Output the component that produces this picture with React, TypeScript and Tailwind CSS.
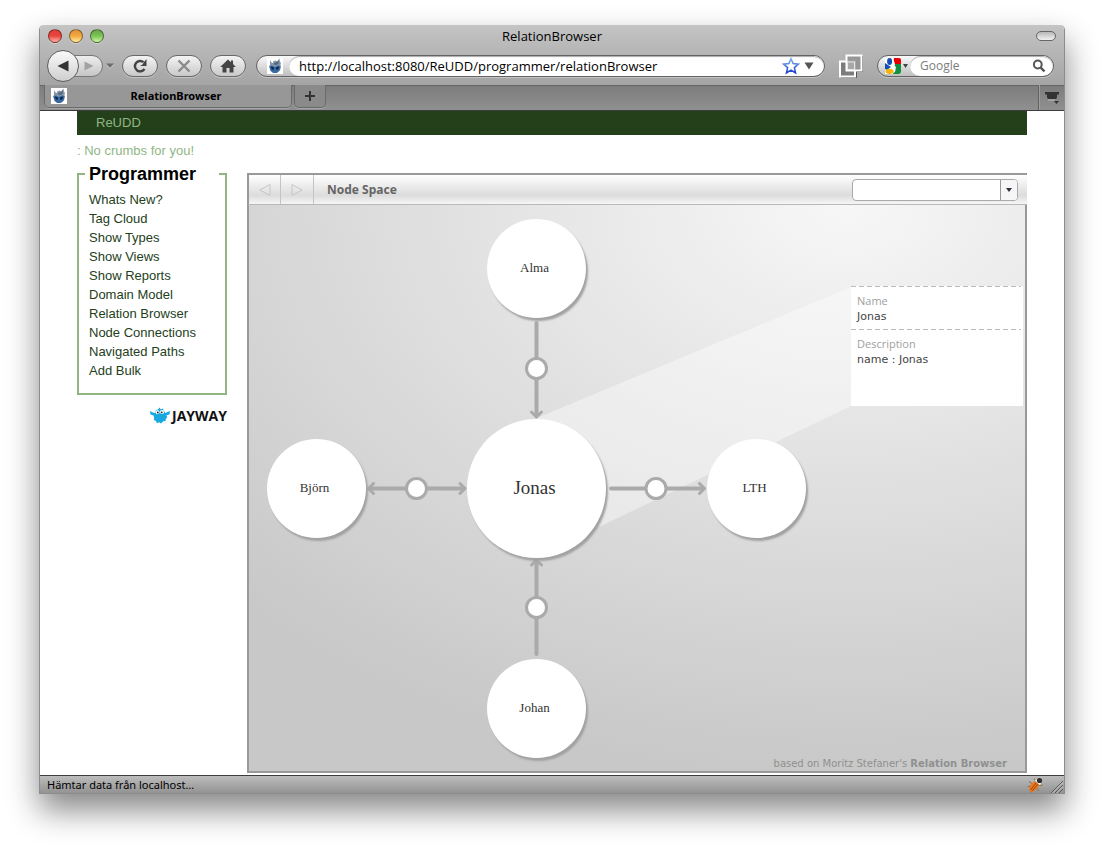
import React from "react";

const UI = "font-['Open_Sans','Noto_Sans',sans-serif]";
const SANS = "font-['Liberation_Sans',Arial,sans-serif]";
const FLASH = "font-['DejaVu_Sans',Verdana,sans-serif]";
const SERIF = "font-['Liberation_Serif',Georgia,serif]";

const PILL =
  "flex items-center justify-center rounded-full border border-[#686868] bg-linear-to-b from-[#f4f4f4] to-[#c9c9c9] shadow-[0_1px_0_#c4c4c4]";

const MENU = [
  "Whats New?",
  "Tag Cloud",
  "Show Types",
  "Show Views",
  "Show Reports",
  "Domain Model",
  "Relation Browser",
  "Node Connections",
  "Navigated Paths",
  "Add Bulk",
];

const NODES = [
  { name: "Alma", place: "left-[238px] top-[14px] size-[99px] text-[13px]" },
  { name: "Björn", place: "left-[18px] top-[234px] size-[99px] text-[13px]" },
  { name: "LTH", place: "left-[458px] top-[234px] size-[99px] text-[13px]" },
  { name: "Johan", place: "left-[238px] top-[454px] size-[99px] text-[13px]" },
  { name: "Jonas", place: "left-[218px] top-[214px] size-[139px] text-[19px]" },
];

function Light({ label, tone }: { label: string; tone: string }) {
  return (
    <button
      type="button"
      aria-label={label}
      className={`size-[14px] rounded-full border border-black/45 shadow-[0_1px_0_#d5d5d5] ${tone}`}
    />
  );
}

function SiteIcon() {
  return (
    <svg viewBox="0 0 16 16" className="size-4" aria-hidden="true">
      <rect width="16" height="16" fill="#fff" />
      <path d="M3 2 4.500 4.500 6 5 6.500 3 9 2.500l1 1 2.500-3 .5 4 1-.5-.5 3.500.5 1.500-1 3.500L10 15H6l-2.500-2L2 8.500 3 7z" fill="#8397a8" />
      <path d="M2.500 8 5 7.500l3 1.500 2.500-1.500 3 .5-1 4.500L9.500 15H6.500L3.500 12.500z" fill="#3568a6" />
      <path d="M4 8.500 7 9.500 6.500 12l-2-1zM9 9.500l3-1-.5 2.500-2 1z" fill="#0d2440" />
      <path d="M7 5 10 4l2-2-.5 4L9 7 7 6.500zM6.500 12.500h3L8 14z" fill="#55697c" />
    </svg>
  );
}

function Chrome() {
  return (
    <header className={`bg-linear-to-b from-[#c4c4c4] to-[#979797] ${UI}`}>
      <div className="flex h-[22px] items-center px-2">
        <div className="flex flex-1 gap-[7px]">
          <Light label="Close" tone="bg-linear-to-b from-[#e04038] via-[#e8433f] to-[#ffb0a8]" />
          <Light label="Minimize" tone="bg-linear-to-b from-[#e2923c] via-[#f2a83e] to-[#fff0a0]" />
          <Light label="Zoom" tone="bg-linear-to-b from-[#68a848] via-[#7cc455] to-[#d0f8a8]" />
        </div>
        <h1 className="text-[13px] leading-[16px] text-black">RelationBrowser</h1>
        <div className="flex flex-1 justify-end">
          <button
            type="button"
            aria-label="Toggle toolbar"
            className="h-[10px] w-5 rounded-full border border-[#666] bg-linear-to-b from-[#b8b8b8] to-[#f2f2f2]"
          />
        </div>
      </div>

      <div className="flex h-[38px] items-center pr-[10px] pb-px pl-[7px]">
        <button
          type="button"
          aria-label="Back"
          className="z-10 flex size-8 items-center justify-center rounded-full border border-[#5e5e5e] bg-linear-to-b from-[#fafafa] to-[#cfcfcf]"
        >
          <svg viewBox="0 0 12 12" className="size-3" aria-hidden="true">
            <path d="M0.5 6 11.5 0.5v11z" fill="#333" />
          </svg>
        </button>
        <button
          type="button"
          aria-label="Forward"
          className="-ml-2 flex h-[22px] w-8 items-center justify-center rounded-r-full border border-[#777] bg-linear-to-b from-[#eee] to-[#c6c6c6] pl-1"
        >
          <svg viewBox="0 0 10 10" className="size-[10px]" aria-hidden="true">
            <path d="M0.5 0.5 9.5 5l-9 4.5z" fill="#a2a2a2" />
          </svg>
        </button>
        <button type="button" aria-label="History" className="ml-[3px] flex w-2 justify-center">
          <svg viewBox="0 0 8 6" className="h-[6px] w-2 shrink-0" aria-hidden="true">
            <path d="M0 0.5h8L4 5z" fill="#6c6c6c" />
            <path d="M0.5 1.500 4 5.500 7.500 1.500" fill="none" stroke="#d0d0d0" strokeWidth=".7" />
          </svg>
        </button>
        <div className="ml-2 flex gap-2">
          <button type="button" aria-label="Reload" className={`h-[22px] w-9 ${PILL}`}>
            <svg viewBox="0 0 16 16" className="size-4" aria-hidden="true">
              <path d="M12.500 11A5.200 5.200 0 1 1 11.500 4.200" fill="none" stroke="#444" strokeWidth="2.400" />
              <path d="M14.500 1v7H8l2.500-1.500L12 4z" fill="#444" />
            </svg>
          </button>
          <button type="button" aria-label="Stop" className={`h-[22px] w-9 ${PILL}`}>
            <svg viewBox="0 0 14 14" className="size-[14px]" aria-hidden="true">
              <path d="M1.500 1.500l11 11M12.500 1.500l-11 11" stroke="#8a8a8a" strokeWidth="2.400" />
            </svg>
          </button>
          <button type="button" aria-label="Home" className={`h-[22px] w-9 ${PILL}`}>
            <svg viewBox="0 0 16 14" className="h-[14px] w-4" aria-hidden="true">
              <path d="M8 0.5l3 2.7V1.5h2v3.6L15.8 8H13.5v5.5h-4V9h-3v4.5h-4V8H.2z" fill="#444" />
            </svg>
          </button>
        </div>

        <div className="ml-[10px] flex h-[22px] min-w-0 flex-1 items-stretch overflow-hidden rounded-full border border-[#636363] bg-linear-to-b from-[#fafafa] to-[#bfbfbf] shadow-[0_1px_0_#c4c4c4]">
          <div className="flex w-8 items-center pl-[10px]">
            <SiteIcon />
          </div>
          <div className="flex min-w-0 flex-1 items-center rounded-full bg-white pr-[10px] pl-[10px] shadow-[inset_0_1px_1px_#aaa]">
            <input
              aria-label="Address"
              defaultValue="http://localhost:8080/ReUDD/programmer/relationBrowser"
              className="h-5 min-w-0 flex-1 bg-transparent text-[13px] text-black outline-none"
            />
            <button type="button" aria-label="Bookmark this page">
              <svg viewBox="0 0 18 18" className="size-[18px]" aria-hidden="true">
                <defs>
                  <linearGradient id="star" x1="0" y1="0" x2="0" y2="1">
                    <stop offset="0" stopColor="#7fb0e8" />
                    <stop offset="1" stopColor="#1e3fd0" />
                  </linearGradient>
                </defs>
                <path
                  d="M9 1.8l2.1 4.8 5.2.5-3.9 3.5 1.1 5.2L9 13.1l-4.5 2.7 1.1-5.2L1.7 7.1l5.2-.5z"
                  fill="#fff"
                  stroke="url(#star)"
                  strokeWidth="1.6"
                />
              </svg>
            </button>
            <button type="button" aria-label="Show address list" className="ml-1">
              <svg viewBox="0 0 10 8" className="h-2 w-[10px]" aria-hidden="true">
                <path d="M0.5 0.5h9L5 7.5z" fill="#555" />
              </svg>
            </button>
          </div>
        </div>

        <button type="button" aria-label="Windows" className="ml-[14px]">
          <svg viewBox="0 0 24 24" className="size-6" aria-hidden="true">
            <path d="M2 23.500h15.500V17M17 17.500h6.500V2" fill="none" stroke="#555" />
            <rect x="1" y="7.5" width="15" height="15" fill="#7c7c7c" stroke="#fff" strokeWidth="2" />
            <rect x="7.500" y="1.500" width="15" height="15" fill="#8d8d8d" fillOpacity=".75" stroke="#fff" strokeWidth="2" />
            <rect x="8.500" y="8" width="7" height="7.500" fill="#a8a8a8" stroke="#e8e8e8" />
          </svg>
        </button>

        <div className="ml-[14px] flex h-[22px] w-[177px] items-stretch overflow-hidden rounded-full border border-[#636363] bg-linear-to-b from-[#fafafa] to-[#bfbfbf] shadow-[0_1px_0_#c4c4c4]">
          <button type="button" aria-label="Choose search engine" className="flex w-8 items-center gap-[2px] pl-[7px]">
            <svg viewBox="0 0 16 16" className="size-4 shrink-0" aria-hidden="true">
              <path d="M0 0h16v16H0z" fill="#fff" />
              <path d="M8 0h6a2 2 0 0 1 2 2v4h-6z" fill="#e60000" />
              <path d="M10 6h6v8a2 2 0 0 1-2 2H8z" fill="#149040" />
              <path d="M0 5l6 4-4 3-2-1z" fill="#1450b4" />
              <path d="M9 0 7.500 6 11 9l-1 5-4 2V8L2 3 4 0z" fill="#fff" />
              <ellipse cx="4.600" cy="3.500" rx="2.500" ry="3.400" fill="#1450b4" />
              <ellipse cx="4.500" cy="13.300" rx="4" ry="2.600" fill="#f5b50e" />
            </svg>
            <svg viewBox="0 0 5 4" className="h-1 w-[5px] shrink-0" aria-hidden="true">
              <path d="M0 0h5L2.500 4z" fill="#444" />
            </svg>
          </button>
          <div className="flex min-w-0 flex-1 items-center rounded-full bg-white pr-[7px] pl-[10px] shadow-[inset_0_1px_1px_#aaa]">
            <input
              aria-label="Search"
              placeholder="Google"
              className="h-5 min-w-0 flex-1 bg-transparent text-[12px] outline-none placeholder:text-[#7d7d7d]"
            />
            <button type="button" aria-label="Start search">
              <svg viewBox="0 0 14 14" className="size-[14px]" aria-hidden="true">
                <circle cx="5.800" cy="5.500" r="3.900" fill="none" stroke="#555" strokeWidth="2" />
                <path d="M8.700 8.600 12.500 12.400" stroke="#555" strokeWidth="2.400" />
              </svg>
            </button>
          </div>
        </div>
      </div>

      <div className="flex h-[26px] items-start border-b border-[#3c3c3c] bg-linear-to-b from-[#7c7c7c] to-[#909090] pl-1 shadow-[inset_0_1px_0_#666]">
        <div className="flex h-[23px] w-[248px] items-center rounded-b-[5px] border-x border-b border-[#6a6a6a] bg-[#979797] pl-[6px] shadow-[0_1px_0_#a5a5a5]">
          <SiteIcon />
          <span className="flex-1 pt-px pr-[6px] text-center font-['Noto_Sans',sans-serif] text-[11px] font-bold text-black">
            RelationBrowser
          </span>
        </div>
        <button
          type="button"
          aria-label="Open a new tab"
          className="ml-[2px] flex h-[23px] w-8 items-center justify-center rounded-b-[5px] border-x border-b border-[#6a6a6a] bg-[#8a8a8a] shadow-[0_1px_0_#a5a5a5]"
        >
          <svg viewBox="0 0 10 10" className="size-[10px]" aria-hidden="true">
            <path d="M5 0v10M0 5h10" stroke="#333" strokeWidth="2" />
          </svg>
        </button>
        <button
          type="button"
          aria-label="List all tabs"
          className="ml-auto flex h-[25px] w-[26px] items-center justify-center border-l border-[#606060] shadow-[inset_1px_0_0_#a0a0a0]"
        >
          <svg viewBox="0 0 14 12" className="h-3 w-[14px]" aria-hidden="true">
            <path d="M0 0h14v2.500h-2V5.500L11 7H3L2 5.500V2.500H0z" fill="#333" />
            <path d="M3 8h7" stroke="#bbb" />
            <path d="M9 9h5l-2.500 3z" fill="#333" />
          </svg>
        </button>
      </div>
    </header>
  );
}

function JaywayLogo() {
  return (
    <a href="#jayway" aria-label="Jayway" className="mt-3 flex items-center justify-end gap-[2px] text-[#111]">
      <svg viewBox="0 0 20 18" className="h-[18px] w-5" aria-hidden="true">
        <path
          d="M0 4l3 1.500L5 6l1-3L8 2.500 9.500.5l1.300 2L13 1.500l.5 2L15.500 6l2-1L20 4l-.5 3.500-3 .8.800 2.200-1.500 1.300-.2 2.200-2.300.2L11 16.500l-1.800-1.200-2.400.9-.7-2.200-2.300-.9.400-2L3.500 8.500.5 7.500z"
          fill="#18a9e0"
        />
        <circle cx="7.500" cy="5.300" r="2" fill="#fff" />
        <circle cx="12" cy="5.100" r="2" fill="#fff" />
        <circle cx="7.800" cy="5.500" r=".9" fill="#222" />
        <circle cx="11.700" cy="5.300" r=".9" fill="#222" />
      </svg>
      <span className="font-['Open_Sans',sans-serif] text-[14px] leading-[18px] font-bold">JAYWAY</span>
    </a>
  );
}

function Sidebar() {
  return (
    <nav aria-label="Programmer" className={`w-[150px] shrink-0 ${SANS}`}>
      <fieldset className="border-2 border-[#8fb683] px-[6px] pb-[13px]">
        <legend className="w-full pl-1 text-[18px] leading-[20px] font-bold text-black">Programmer</legend>
        <ul className="pt-[6px] pl-1">
          {MENU.map((item) => (
            <li key={item} className="text-[13px] leading-[19px]">
              <a href="#menu" className="text-[#24401b]">
                {item}
              </a>
            </li>
          ))}
        </ul>
      </fieldset>
      <JaywayLogo />
    </nav>
  );
}

function Edges() {
  return (
    <svg className="absolute top-0 left-0 h-full w-full" aria-hidden="true">
      <polygon points="288,213 602,82 602,201 350,322" fill="#fff" fillOpacity=".4" />
      <g fill="none" stroke="#aaa" strokeWidth="4" strokeLinecap="round">
        <path d="M287.500 118V209M287.500 356V449M362 283.500H454M121 283.500H215" />
        <g strokeWidth="3" strokeLinejoin="round">
          <path d="M282.500 207l5 5 5-5M282.500 360l5-5 5 5M450.500 278.500l5 5-5 5M124.500 278.500l-5 5 5 5M211 278.500l5 5-5 5" />
        </g>
      </g>
      <g fill="#fff" stroke="#aaa" strokeWidth="3">
        <circle cx="287.500" cy="163.500" r="10" />
        <circle cx="287.500" cy="402.500" r="10" />
        <circle cx="167.500" cy="283.500" r="10" />
        <circle cx="407" cy="283.500" r="10" />
      </g>
    </svg>
  );
}

function Browser() {
  return (
    <section className="min-w-0 flex-1">
      <div className="flex h-8 items-center border-t-2 border-b border-l-2 border-t-[#999] border-b-[#b9b9b9] border-l-[#999] bg-linear-to-b from-white via-[#dcdcdc] via-70% to-[#f6f6f6] pr-[9px]">
        <button type="button" aria-label="Previous" className="flex h-full w-8 items-center justify-center border-r border-[#c4c4c4]">
          <svg viewBox="0 0 12 12" className="size-3" aria-hidden="true">
            <path d="M11 .5v11L.8 6z" fill="none" stroke="#c6c6c6" />
          </svg>
        </button>
        <button type="button" aria-label="Next" className="flex h-full w-[33px] items-center justify-center border-r border-[#c4c4c4]">
          <svg viewBox="0 0 12 12" className="size-3" aria-hidden="true">
            <path d="M1 .5v11L11.200 6z" fill="none" stroke="#c6c6c6" />
          </svg>
        </button>
        <h2 className="ml-[13px] flex-1 pt-px font-['Noto_Sans',Tahoma,sans-serif] text-[12px] leading-[16px] font-bold text-[#666]">
          Node Space
        </h2>
        <div className="flex h-[22px] w-[166px] overflow-hidden rounded border border-[#aaa] bg-white">
          <input aria-label="Find node" className={`min-w-0 flex-1 px-1 text-[11px] outline-none ${FLASH}`} />
          <button type="button" aria-label="Show nodes" className="flex w-[17px] items-center justify-center border-l border-[#999] bg-[#f6f6f6]">
            <svg viewBox="0 0 6 4" className="h-1 w-[6px]" aria-hidden="true">
              <path d="M0 0h6L3 4z" fill="#2b333c" />
            </svg>
          </button>
        </div>
      </div>

      <div className="relative h-[568px] overflow-hidden border-r-2 border-b-2 border-l-2 border-[#999] bg-[radial-gradient(ellipse_840px_570px_at_77%_0%,#f7f7f7,#c8c8c8)]">
        <Edges />
        {NODES.map((node) => (
          <button
            key={node.name}
            type="button"
            className={`absolute flex items-center justify-center rounded-full bg-white pr-1 pb-px text-[#333] shadow-[2px_3px_2px_#a2a2a2] ${SERIF} ${node.place}`}
          >
            {node.name}
          </button>
        ))}
        <dl className={`absolute top-[81px] right-[2px] w-[172px] bg-white pb-[38px] text-[11px] leading-[16px] ${FLASH}`}>
          <svg className="block h-px w-[170px]" aria-hidden="true">
            <path d="M0 .5H170" stroke="#bbb" strokeDasharray="5 3" />
          </svg>
          <div className="px-[6px] pt-[6px] pb-[4px]">
            <dt className={`text-[#a0a0a0] ${UI}`}>Name</dt>
            <dd className="text-[#444]">Jonas</dd>
          </div>
          <svg className="block h-px w-[170px]" aria-hidden="true">
            <path d="M0 .5H170" stroke="#bbb" strokeDasharray="5 3" />
          </svg>
          <div className="px-[6px] pt-[6px]">
            <dt className={`text-[#a0a0a0] ${UI}`}>Description</dt>
            <dd className="text-[#444]">name : Jonas</dd>
          </div>
        </dl>
        <p className={`absolute right-[18px] bottom-0 text-[10px] leading-[14px] text-[#909090] ${FLASH}`}>
          based on Moritz Stefaner's <b>Relation Browser</b>
        </p>
      </div>
    </section>
  );
}

function StatusBar() {
  return (
    <footer className="flex h-[18px] items-center border-t border-[#3c3c3c] bg-linear-to-b from-[#bdbdbd] to-[#939393] pl-[7px] font-['Noto_Sans',sans-serif]">
      <p className="flex-1 text-[11px] leading-[17px] text-black">Hämtar data från localhost…</p>
      <button type="button" aria-label="Firebug" className="mr-2">
        <svg viewBox="0 0 16 16" className="size-4" aria-hidden="true">
          <path d="M2 4.500 5 6.500M.8 9.500 5 9M4 15.500l1.500-3M7.500 1.500 8.500 5M15.500 8l-4 .5M12 13.500 9.500 11" stroke="#8a6a3a" />
          <ellipse cx="7" cy="9.500" rx="3.600" ry="6.200" transform="rotate(40 7 9.500)" fill="#e8761c" />
          <path d="M3.500 13l6-7.500M5.500 13.500l5.500-6.500" stroke="#8c3c08" strokeWidth=".8" />
          <path d="M8.500 3l5 4.500" stroke="#f4f0e8" strokeWidth="2" />
          <circle cx="12.500" cy="3.500" r="2.600" fill="#2c3034" />
        </svg>
      </button>
      <svg viewBox="0 0 12 12" className="mr-[1px] size-3 self-end" aria-hidden="true">
        <path d="M0 12 12 0M4 12l8-8M8 12l4-4" stroke="#5a5a5a" />
        <path d="M1.500 12 12 1.500M5.500 12 12 5.500" stroke="#d0d0d0" strokeWidth=".7" />
      </svg>
    </footer>
  );
}

export default function App() {
  return (
    <div className="bg-white px-[39px] pt-[25px] pb-[54px]">
      <div className="overflow-hidden rounded-t-[5px] border-x border-b border-[#8c8c8c] bg-white shadow-[0_16px_32px_rgba(0,0,0,0.48)]">
        <Chrome />
        <main className="px-[37px] pb-[2px]">
          <div className={`bg-[#24401b] pl-[19px] ${SANS}`}>
            <a href="#home" className="block text-[13px] leading-[24px] text-[#8fb683]">
              ReUDD
            </a>
          </div>
          <p className={`pt-[6px] text-[13px] leading-[19px] text-[#8fb683] ${SANS}`}>: No crumbs for you!</p>
          <div className="flex items-start gap-5">
            <div className="pt-1">
              <Sidebar />
            </div>
            <div className="flex min-w-0 flex-1 pt-[13px]">
              <Browser />
            </div>
          </div>
        </main>
        <StatusBar />
      </div>
    </div>
  );
}
